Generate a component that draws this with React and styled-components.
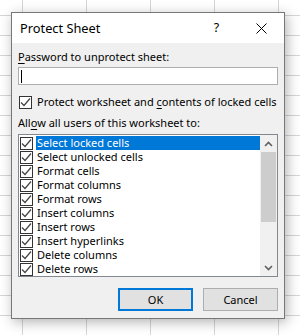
import React from "react";
import styled, { createGlobalStyle } from "styled-components";

const Global = createGlobalStyle`
  html, body { margin: 0; padding: 0; }
  body { font-family: "Noto Sans", "Liberation Sans", sans-serif; }
`;

const Sheet = styled.div`
  position: relative;
  width: 300px;
  height: 335px;
  overflow: hidden;
  background-color: #fff;
  background-image:
    linear-gradient(to right, #d6d6d6 1px, transparent 1px),
    linear-gradient(to bottom, #d6d6d6 1px, transparent 1px);
  background-size: 64px 100%, 100% 20px;
  background-position: 22px 0, 0 15px;
`;

const Dialog = styled.div`
  position: absolute;
  left: 11px;
  top: 12px;
  width: 274px;
  box-sizing: border-box;
  border: 1px solid #777;
  background: #f0f0f0;
  box-shadow: 2px 3px 12px rgba(0, 0, 0, 0.3);
  display: flex;
  flex-direction: column;
  font-size: 11px;
  line-height: 14px;
  color: #000;
`;

const TitleBar = styled.div`
  height: 30px;
  background: #fff;
  display: flex;
  align-items: center;
  padding-left: 8px;
`;

const Title = styled.div`
  flex: 1;
  font-size: 12.8px;
`;

const TitleButton = styled.div`
  width: 45px;
  height: 30px;
  display: flex;
  align-items: center;
  justify-content: center;
  font-size: 12.5px;
`;

const Body = styled.div`
  display: flex;
  flex-direction: column;
  padding: 0 6px 7px 6px;
`;

const Label = styled.div`
  line-height: 14px;
  height: 14px;
  margin-top: ${(p) => p.$mt || 0}px;
  white-space: nowrap;
`;

const Key = styled.span`
  text-decoration: underline;
  text-underline-offset: 2px;
`;

const Input = styled.div`
  margin-top: 3px;
  height: 18px;
  box-sizing: border-box;
  border: 1px solid #adadad;
  background: #fff;
  display: flex;
  align-items: center;
  padding-left: 2px;
`;

const Caret = styled.div`
  width: 1px;
  height: 13px;
  background: #000;
`;

const CheckRow = styled.div`
  margin-top: 10px;
  height: 14px;
  display: flex;
  align-items: center;
  gap: 5px;
  padding-left: 1px;
  white-space: nowrap;
`;

const Box = styled.div`
  width: 13px;
  height: 13px;
  box-sizing: border-box;
  border: 1px solid #333;
  background: #fff;
  flex: none;
  display: flex;
  align-items: center;
  justify-content: center;
`;

const List = styled.div`
  margin-top: 4px;
  box-sizing: border-box;
  border: 1px solid #828790;
  padding-top: 1px;
  background: #fff;
  display: flex;
  height: 143px;
`;

const Items = styled.div`
  flex: 1;
  display: flex;
  flex-direction: column;
  padding-left: 1px;
`;

const Item = styled.div`
  height: 14px;
  display: flex;
  align-items: center;
  gap: 3px;
  white-space: nowrap;
`;

const ItemText = styled.span`
  flex: 1;
  height: 14px;
  line-height: 14px;
  padding-left: 1px;
  background: ${(p) => (p.$sel ? "#0078d7" : "transparent")};
  color: ${(p) => (p.$sel ? "#fff" : "#000")};
`;

const ScrollBar = styled.div`
  width: 17px;
  background: #f0f0f0;
  display: flex;
  flex-direction: column;
  margin-top: -1px;
`;

const Arrow = styled.div`
  height: 17px;
  display: flex;
  align-items: center;
  justify-content: center;
`;

const Track = styled.div`
  flex: 1;
  display: flex;
  flex-direction: column;
  align-items: center;
`;

const Thumb = styled.div`
  width: 15px;
  height: 70px;
  background: #cdcdcd;
`;

const Buttons = styled.div`
  margin-top: 11px;
  display: flex;
  justify-content: flex-end;
  gap: 10px;
`;

const Button = styled.div`
  width: 75px;
  height: 23px;
  box-sizing: border-box;
  background: #e1e1e1;
  border: ${(p) => (p.$primary ? "2px solid #0078d7" : "1px solid #adadad")};
  display: flex;
  align-items: center;
  justify-content: center;
  font-size: 11px;
`;

const Check = () => (
  <svg width="11" height="11" viewBox="0 0 11 11">
    <polyline
      points="1,5.5 4,8.5 10,1.5"
      fill="none"
      stroke="#444"
      strokeWidth="1.2"
    />
  </svg>
);

const Chevron = ({ up }) => (
  <svg width="9" height="6" viewBox="0 0 9 6">
    <polyline
      points={up ? "1,5 4.5,1.5 8,5" : "1,1 4.5,4.5 8,1"}
      fill="none"
      stroke="#606060"
      strokeWidth="1.6"
    />
  </svg>
);

const items = [
  "Select locked cells",
  "Select unlocked cells",
  "Format cells",
  "Format columns",
  "Format rows",
  "Insert columns",
  "Insert rows",
  "Insert hyperlinks",
  "Delete columns",
  "Delete rows",
];

export default function App() {
  return (
    <>
      <Global />
      <Sheet>
        <Dialog>
          <TitleBar>
            <Title>Protect Sheet</Title>
            <TitleButton>?</TitleButton>
            <TitleButton>
              <svg width="11" height="11" viewBox="0 0 11 11">
                <path d="M0.5 0.5 L10.5 10.5 M10.5 0.5 L0.5 10.5" stroke="#000" strokeWidth="1" />
              </svg>
            </TitleButton>
          </TitleBar>
          <Body>
            <Label $mt={7}>
              <Key>P</Key>assword to unprotect sheet:
            </Label>
            <Input>
              <Caret />
            </Input>
            <CheckRow>
              <Box>
                <Check />
              </Box>
              <span>
                Protect worksheet and <Key>c</Key>ontents of locked cells
              </span>
            </CheckRow>
            <Label $mt={7}>
              All<Key>o</Key>w all users of this worksheet to:
            </Label>
            <List>
              <Items>
                {items.map((t, i) => (
                  <Item key={t}>
                    <Box>
                      <Check />
                    </Box>
                    <ItemText $sel={i === 0}>{t}</ItemText>
                  </Item>
                ))}
              </Items>
              <ScrollBar>
                <Arrow>
                  <Chevron up />
                </Arrow>
                <Track>
                  <Thumb />
                </Track>
                <Arrow>
                  <Chevron />
                </Arrow>
              </ScrollBar>
            </List>
            <Buttons>
              <Button $primary>OK</Button>
              <Button>Cancel</Button>
            </Buttons>
          </Body>
        </Dialog>
      </Sheet>
    </>
  );
}
